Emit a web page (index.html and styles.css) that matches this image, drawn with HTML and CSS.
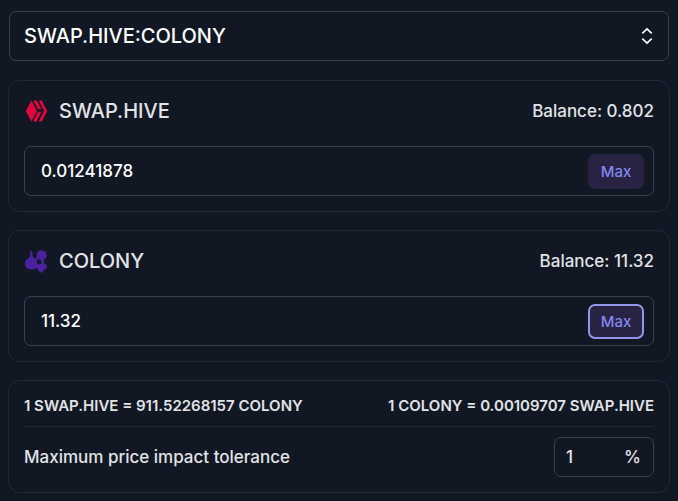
FILE: index.html
```html
<!DOCTYPE html>
<html lang="en">
<head>
    <meta charset="UTF-8">
    <meta name="viewport" content="width=device-width, initial-scale=1.0">
    <title>Swap</title>
    <link rel="stylesheet" href="styles.css">
</head>
<body>

    <form class="swap">
        <!-- Pool picker -->
        <div class="pool">
            <select class="pool-select" aria-label="Pool">
                <option>SWAP.HIVE:COLONY</option>
            </select>
            <svg class="pool-icon" width="12" height="18" viewBox="0 0 12 18" fill="none" stroke="currentColor" stroke-width="1.7">
                <path d="M1.3 6.4 6 2 10.7 6.4M1.3 11.6 6 16 10.7 11.6"/>
            </svg>
        </div>

        <!-- First token -->
        <section class="card">
            <div class="card-header">
                <svg class="token-icon" width="24" height="24" viewBox="0 0 24 24" fill="#e0063f">
                    <path d="M7.4 1.6 13 12 7.4 22.4 1.8 12z"/>
                    <path d="M9.2 1.5h3.5l4.7 8.8h-3.5zM14.7 1.5h3.1L23.2 12l-5.4 10.5h-3.1L20 12zM13.9 12.7h3.5l-4.7 9.8H9.2z"/>
                </svg>
                <label class="token-name" for="amount-hive">SWAP.HIVE</label>
                <span class="balance">Balance: 0.802</span>
            </div>
            <div class="field">
                <input class="field-input" type="text" id="amount-hive" value="0.01241878">
                <button class="max-btn" type="button">Max</button>
            </div>
        </section>

        <!-- Second token -->
        <section class="card">
            <div class="card-header">
                <svg class="token-icon" width="24" height="24" viewBox="0 0 24 24" fill="#4c219f">
                    <path fill-rule="evenodd" d="M6.2 2.8C6.5 1.4 8 1.4 8.3 2.8L8.9 8 11 9.4 13 8.6C11.5 5 13.2 1.4 17 1.2 20.5 1.4 22.8 3.6 22.7 6.6 22.5 8.7 21.4 9.8 19.8 10.3L20 14.5C22 14.8 23 16 22.8 17.7 22.6 19.4 21.4 20.2 20 20.7 19.4 22.8 18 23.7 16.7 23.5 15 23 14.4 21.5 13.6 20L12 18.7C10 20.7 7 21 4.5 19.9 1.5 18.7.5 16 1.1 13.4 1.6 10.8 3.6 9.4 5.7 8.6zM13 11.1 12.7 14 14.8 15.6 17.3 14.8 16.8 11.2 15 10.3z"/>
                </svg>
                <label class="token-name" for="amount-colony">COLONY</label>
                <span class="balance">Balance: 11.32</span>
            </div>
            <div class="field">
                <input class="field-input" type="text" id="amount-colony" value="11.32">
                <button class="max-btn active" type="button">Max</button>
            </div>
        </section>

        <!-- Rates and price impact -->
        <section class="card">
            <div class="rates">
                <span>1 SWAP.HIVE = 911.52268157 COLONY</span>
                <span>1 COLONY = 0.00109707 SWAP.HIVE</span>
            </div>
            <div class="impact">
                <label for="impact">Maximum price impact tolerance</label>
                <div class="impact-field">
                    <input class="impact-input" type="text" id="impact" value="1">
                    <span>%</span>
                </div>
            </div>
        </section>
    </form>

</body>
</html>
```
FILE: styles.css
```css
* {
    box-sizing: border-box;
}

body {
    margin: 0;
    padding: 11px 8px 8px;
    background-color: #111824;
    color: #e1e3e6;
    font-family: Inter, sans-serif;
    font-size: 17px;
    font-weight: 500;
}

input, select, button {
    font: inherit;
    color: inherit;
}

.swap {
    display: flex;
    flex-direction: column;
    gap: 18px;
}

/* Pool picker */
.pool {
    position: relative;
    margin: 0 1px 1px;
}

.pool-select {
    display: block;
    width: 100%;
    height: 50px;
    padding: 0 40px 0 14px;
    appearance: none;
    background-color: transparent;
    border: 1px solid #36424e;
    border-radius: 7px;
    color: #fff;
    font-size: 20px;
}

.pool-icon {
    position: absolute;
    top: 16px;
    right: 16px;
    color: #fff;
    pointer-events: none;
}

/* Cards */
.card {
    padding: 15px;
    border: 1px solid #1f2a36;
    border-radius: 12px;
}

.card-header {
    display: flex;
    align-items: center;
    height: 30px;
    margin-bottom: 20px;
}

.token-name {
    margin-left: 11px;
    font-size: 20px;
}

.balance {
    margin-left: auto;
}

.field {
    display: flex;
    align-items: center;
    height: 50px;
    padding: 0 9px 0 16px;
    border: 1px solid #36424e;
    border-radius: 7px;
}

.field-input {
    flex: 1;
    min-width: 0;
    padding: 0;
    background: none;
    border: none;
    outline: none;
    color: #fff;
}

.max-btn {
    width: 56px;
    height: 35px;
    padding: 0;
    background-color: #282343;
    border: none;
    border-radius: 7px;
    color: #8088ee;
    font-size: 15px;
    cursor: pointer;
}

.max-btn.active {
    border: 2px solid #9296e8;
}

/* Rates */
.rates {
    display: flex;
    justify-content: space-between;
    padding-bottom: 10px;
    border-bottom: 1px solid #1f2a36;
    font-size: 15px;
    font-weight: 600;
    line-height: 20px;
}

.impact {
    display: flex;
    justify-content: space-between;
    align-items: center;
    padding-top: 10px;
}

.impact-field {
    display: flex;
    align-items: center;
    width: 100px;
    height: 40px;
    padding: 0 12px 0 11px;
    border: 1px solid #36424e;
    border-radius: 7px;
}

.impact-input {
    flex: 1;
    min-width: 0;
    padding: 0;
    background: none;
    border: none;
    outline: none;
}
```
